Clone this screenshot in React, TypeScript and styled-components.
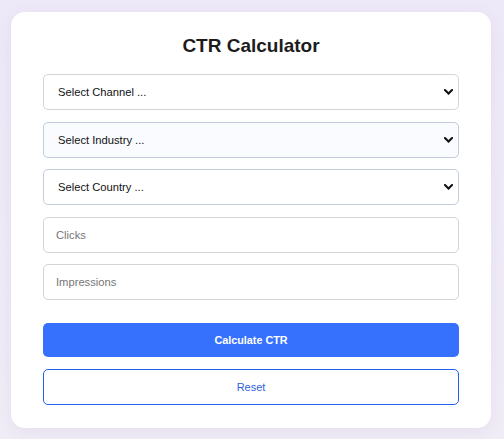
import React, { useState } from "react";
import styled, { createGlobalStyle } from "styled-components";

const GlobalStyle = createGlobalStyle`
  html, body {
    margin: 0;
    padding: 0;
    background: #efeaf7;
    font-family: "Liberation Sans", Arial, sans-serif;
  }
  * {
    box-sizing: border-box;
  }
`;

const Page = styled.div`
  min-height: 439px;
  padding: 12px 13px 11px 11px;
  background: linear-gradient(180deg, #eee9f8 0%, #f1edf6 100%);
`;

const Card = styled.div`
  width: 480px;
  background: #fff;
  border-radius: 14px;
  padding: 22px 32px 23px;
  box-shadow: 0 4px 18px rgba(90, 70, 140, 0.08);
  display: flex;
  flex-direction: column;
`;

const Title = styled.h2`
  margin: 0 0 16px;
  height: 24px;
  line-height: 24px;
  font-size: 19px;
  font-weight: 700;
  text-align: center;
  color: #1c1c1c;
`;

const Fields = styled.div`
  display: flex;
  flex-direction: column;
  gap: 11.5px;
`;

const SelectWrap = styled.div`
  position: relative;
`;

const Select = styled.select<{ $tint?: "plain" | "blue" | "soft" }>`
  appearance: none;
  width: 100%;
  height: 36px;
  padding: 0 28px 0 14px;
  border-radius: 5px;
  border: 1px solid
    ${(p) => (p.$tint === "plain" || !p.$tint ? "#d4d4d4" : "#c2cddc")};
  background: ${(p) => (p.$tint === "blue" ? "#f9fbfe" : "#fff")};
  font-family: "Liberation Sans", Arial, sans-serif;
  font-size: 11.2px;
  color: #111;
  outline: none;
`;

const Chevron = styled.svg`
  position: absolute;
  right: 6px;
  top: 50%;
  width: 9px;
  height: 6px;
  margin-top: -3px;
  pointer-events: none;
`;

const Input = styled.input`
  width: 100%;
  height: 36px;
  padding: 0 12px;
  border-radius: 5px;
  border: 1px solid #d4d4d4;
  background: #fff;
  font-family: "Liberation Sans", Arial, sans-serif;
  font-size: 11.2px;
  color: #111;
  outline: none;
  &::placeholder {
    color: #767676;
  }
`;

const Button = styled.button<{ $variant?: "primary" | "outline" }>`
  width: 100%;
  border-radius: 5px;
  font-family: "Liberation Sans", Arial, sans-serif;
  cursor: pointer;
  ${(p) =>
    p.$variant === "outline"
      ? `
    height: 36px;
    margin-top: 12px;
    background: #fff;
    border: 1.5px solid #2261ee;
    color: #2d5fdc;
    font-size: 11px;
    font-weight: 400;
  `
      : `
    height: 34px;
    margin-top: 23px;
    background: #3671fe;
    border: none;
    color: #fff;
    font-size: 10.8px;
    font-weight: 700;
  `}
`;

type Option = { label: string; tint: "plain" | "blue" | "soft" };

const selects: Option[] = [
  { label: "Select Channel ...", tint: "plain" },
  { label: "Select Industry ...", tint: "blue" },
  { label: "Select Country ...", tint: "soft" },
];

const Arrow = () => (
  <Chevron viewBox="0 0 9 6">
    <path
      d="M1 1 L4.5 4.5 L8 1"
      fill="none"
      stroke="#111"
      strokeWidth="2"
      strokeLinecap="square"
    />
  </Chevron>
);

export default function App() {
  const [clicks, setClicks] = useState("");
  const [impressions, setImpressions] = useState("");

  return (
    <>
      <GlobalStyle />
      <Page>
        <Card>
          <Title>CTR Calculator</Title>
          <Fields>
            {selects.map((s) => (
              <SelectWrap key={s.label}>
                <Select $tint={s.tint} defaultValue="">
                  <option value="">{s.label}</option>
                </Select>
                <Arrow />
              </SelectWrap>
            ))}
            <Input
              placeholder="Clicks"
              value={clicks}
              onChange={(e) => setClicks(e.target.value)}
            />
            <Input
              placeholder="Impressions"
              value={impressions}
              onChange={(e) => setImpressions(e.target.value)}
            />
          </Fields>
          <Button $variant="primary">Calculate CTR</Button>
          <Button
            $variant="outline"
            onClick={() => {
              setClicks("");
              setImpressions("");
            }}
          >
            Reset
          </Button>
        </Card>
      </Page>
    </>
  );
}
